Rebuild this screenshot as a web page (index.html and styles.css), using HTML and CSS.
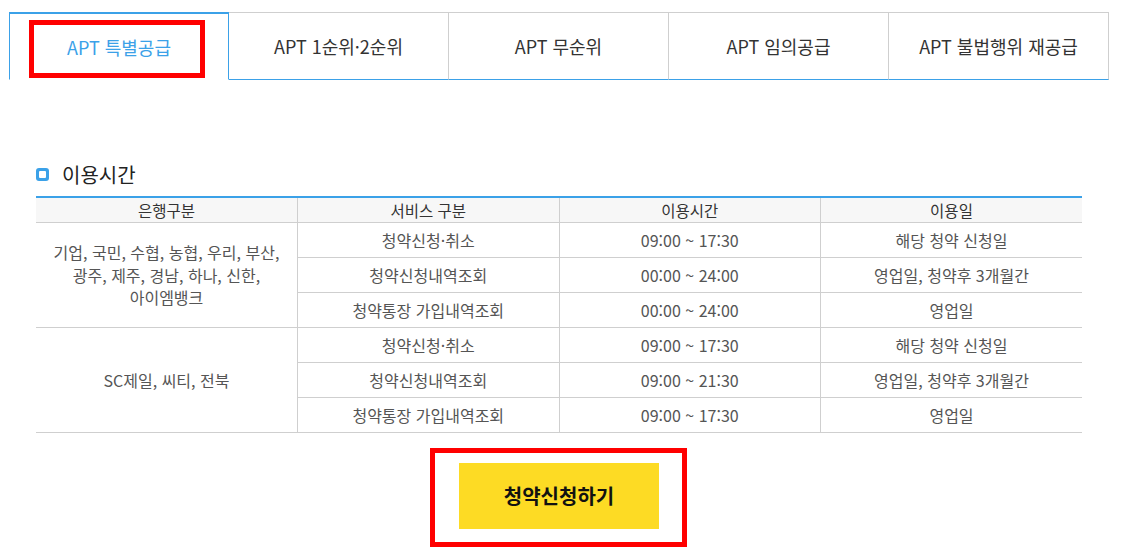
FILE: index.html
```html
<!DOCTYPE html>
<html lang="ko">
<head>
<meta charset="utf-8">
<title>청약 이용시간</title>
<link rel="stylesheet" href="styles.css">
</head>
<body>
<div class="page">
  <ul class="tabs">
    <li class="tab active">APT 특별공급</li>
    <li class="tab">APT 1순위·2순위</li>
    <li class="tab">APT 무순위</li>
    <li class="tab">APT 임의공급</li>
    <li class="tab">APT 불법행위 재공급</li>
  </ul>

  <section class="usage">
    <h3 class="title"><span class="title-icon"></span>이용시간</h3>
    <table class="time-table">
      <thead>
        <tr>
          <th>은행구분</th>
          <th>서비스 구분</th>
          <th>이용시간</th>
          <th>이용일</th>
        </tr>
      </thead>
      <tbody>
        <tr>
          <td rowspan="3" class="bank">기업, 국민, 수협, 농협, 우리, 부산,<br>광주, 제주, 경남, 하나, 신한,<br>아이엠뱅크</td>
          <td>청약신청·취소</td>
          <td>09:00 ~ 17:30</td>
          <td>해당 청약 신청일</td>
        </tr>
        <tr>
          <td>청약신청내역조회</td>
          <td>00:00 ~ 24:00</td>
          <td>영업일, 청약후 3개월간</td>
        </tr>
        <tr>
          <td>청약통장 가입내역조회</td>
          <td>00:00 ~ 24:00</td>
          <td>영업일</td>
        </tr>
        <tr>
          <td rowspan="3" class="bank">SC제일, 씨티, 전북</td>
          <td>청약신청·취소</td>
          <td>09:00 ~ 17:30</td>
          <td>해당 청약 신청일</td>
        </tr>
        <tr>
          <td>청약신청내역조회</td>
          <td>09:00 ~ 21:30</td>
          <td>영업일, 청약후 3개월간</td>
        </tr>
        <tr>
          <td>청약통장 가입내역조회</td>
          <td>09:00 ~ 17:30</td>
          <td>영업일</td>
        </tr>
      </tbody>
    </table>
    <div class="btn-wrap">
      <a class="apply-btn" href="#">청약신청하기</a>
    </div>
  </section>

  <div class="mark mark-tab"></div>
  <div class="mark mark-btn"></div>
</div>
</body>
</html>
```

FILE: styles.css
```css
* { box-sizing: border-box; }

body {
  margin: 0;
  background: #fff;
  font-family: "Noto Sans CJK KR", "Noto Sans", sans-serif;
  color: #333;
}

.page {
  position: relative;
  width: 1123px;
  height: 552px;
  padding: 12px 0 0 9px;
  overflow: hidden;
}

.tabs {
  display: flex;
  margin: 0;
  padding: 0;
  list-style: none;
  width: 1100px;
}

.tab {
  flex: 0 0 220px;
  height: 68px;
  display: flex;
  align-items: center;
  justify-content: center;
  border-top: 1px solid #cfcfcf;
  border-right: 1px solid #cfcfcf;
  border-bottom: 1px solid #3ba1e8;
  font-size: 18px;
  color: #333;
}

.tab.active {
  border-top: 2px solid #3ba1e8;
  border-left: 1px solid #3ba1e8;
  border-right: 1px solid #3ba1e8;
  border-bottom: 1px solid #fff;
  color: #3ba1e8;
  padding-top: 1px;
}

.usage {
  margin-left: 27px;
  width: 1046px;
}

.title {
  display: flex;
  align-items: center;
  margin: 81px 0 0;
  height: 26px;
  font-size: 20px;
  font-weight: normal;
  color: #222;
}

.title-icon {
  width: 13px;
  height: 13px;
  border-radius: 3px;
  background: #3ba1e8;
  margin: 1px 13px 0 0;
  display: flex;
  align-items: center;
  justify-content: center;
}

.title-icon::after {
  content: "";
  width: 7px;
  height: 7px;
  background: #fff;
  border-radius: 1px;
}

.time-table {
  width: 1046px;
  margin-top: 9px;
  border-collapse: collapse;
  border-top: 2px solid #3ba1e8;
  table-layout: fixed;
  font-size: 16px;
}

.time-table th {
  height: 25px;
  padding: 0;
  background: #f7f7f7;
  font-weight: normal;
  font-size: 15.5px;
  color: #333;
  border-left: 1px solid #cfcfcf;
  border-bottom: 1px solid #cfcfcf;
  line-height: 20px;
}

.time-table td {
  height: 35px;
  padding: 0;
  text-align: center;
  color: #555;
  border-left: 1px solid #cfcfcf;
  border-bottom: 1px solid #cfcfcf;
}

.time-table th:first-child,
.time-table td.bank {
  border-left: none;
}

.time-table td.bank {
  line-height: 22.5px;
  padding-top: 1px;
}

.btn-wrap {
  display: flex;
  justify-content: center;
  padding-top: 30px;
}

.apply-btn {
  width: 200px;
  height: 66px;
  display: flex;
  align-items: center;
  justify-content: center;
  background: #fddb24;
  color: #111;
  font-size: 20px;
  font-weight: bold;
  text-decoration: none;
}

.mark {
  position: absolute;
  border: 5px solid #ff0000;
}

.mark-tab {
  left: 29px;
  top: 20px;
  width: 176px;
  height: 58px;
}

.mark-btn {
  left: 430px;
  top: 448px;
  width: 257px;
  height: 99px;
}
```
